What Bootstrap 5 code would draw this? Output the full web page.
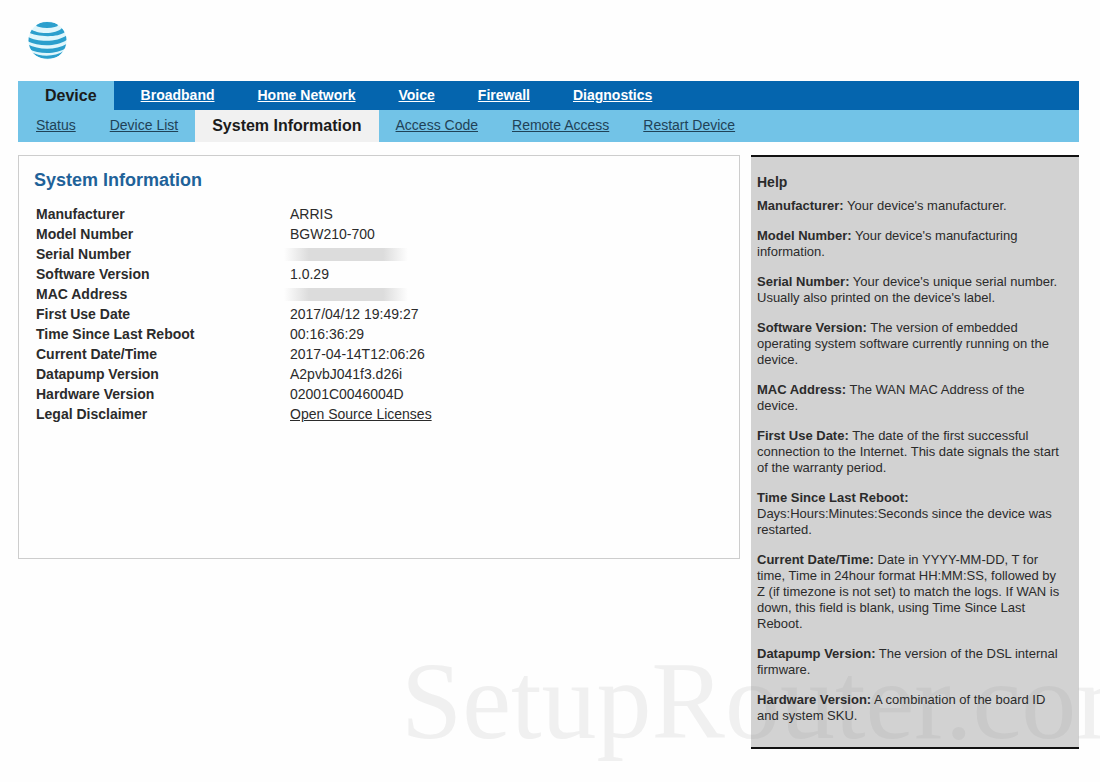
<!DOCTYPE html>
<html lang="en">
<head>
<meta charset="utf-8">
<meta name="viewport" content="width=device-width, initial-scale=1">
<title>System Information</title>
<link href="https://cdn.jsdelivr.net/npm/bootstrap@5.3.0/dist/css/bootstrap.min.css" rel="stylesheet">
<style>
  body { font-family: "Liberation Sans", Arial, sans-serif; font-size: 14px; line-height: 20px; color: #2b2b2b; background: #fefefe; }
  .page { padding: 20px 21px 33px 18px; overflow: hidden; }
  .brand { margin: 0 0 20px 9px; width: 41px; height: 41px; }
  .tabs-main { background: #0565ae; line-height: 29px; }
  .tabs-main .nav-item { margin-left: 43px; }
  .tabs-main .nav-item:nth-child(2) { margin-left: 27px; }
  .tabs-main a { color: #fff; font-weight: 700; }
  .tabs-main .current { margin-left: 0; padding: 0 17px 0 27px; background: #72c3e7; }
  .tabs-sub { background: #72c3e7; line-height: 30px; padding-left: 1px; }
  .tabs-sub .nav-item { padding: 0 17px 2px; }
  .tabs-sub a { color: #1f4257; }
  .tabs-sub .current { background: #f1f1f1; line-height: 32px; padding-bottom: 0; }
  .current { color: #1b1b1b; font-size: 16px; font-weight: 700; }
  .content-row { margin-top: 13px; gap: 11px; }
  .panel { border: 1px solid #cdcdcd; min-height: 404px; padding: 14px 15px; }
  .panel h1 { font-size: 18px; line-height: 20px; font-weight: 700; color: #1f6299; margin: 0 0 14px; }
  .info { margin-left: 2px; }
  .info th { width: 254px; padding: 0; }
  .info td { padding: 0; }
  .info a { color: #2b2b2b; }
  .redacted { display: block; width: 124px; height: 13px; margin-left: -6px; background: linear-gradient(90deg, transparent, #dcdcdc 20%, #dcdcdc 80%, transparent); }
  .help { flex: 0 0 328px; background: rgba(132,132,132,.36); border: solid #111; border-width: 2px 0; padding: 17px 14px 23px 6px; line-height: 16px; font-size: 13px; }
  .help h2 { font-size: 14px; line-height: 16px; font-weight: 700; margin: 0 0 8px; }
  .help p { margin: 0 0 14px; }
  .watermark { left: 401px; right: 0; bottom: 20px; z-index: 0; overflow: hidden; white-space: nowrap; font: 110px/122px "Liberation Serif", "Times New Roman", serif; color: #f0f0f0; pointer-events: none; }
</style>
</head>
<body>
<div class="page position-relative min-vh-100">
  <div class="watermark position-absolute" aria-hidden="true">SetupRouter.com</div>
  <header>
    <svg class="brand d-block" viewBox="0 0 41 41" role="img" aria-label="AT&amp;T">
      <defs><clipPath id="globe"><circle cx="20.500" cy="20.500" r="19"/></clipPath></defs>
      <g clip-path="url(#globe)">
        <rect width="41" height="41" fill="#dff6fc"/>
        <ellipse cx="20" cy="5" rx="11" ry="3" fill="#2b9fcd"/>
        <g fill="#2b9fcd">
          <path d="M4 9 C9 14 29 15 35 8 L38 12 C31 18 9 17 1 12Z"/>
          <path d="M0 16 C8 22 30 23 40 15 L41 19 C29 28 10 26 0 21Z"/>
          <path d="M0 24 C10 30 30 31 41 23 L39 28 C29 35 11 34 2 29Z"/>
          <path d="M4 32 C13 37 28 37 37 31 L32 36 C24 40 15 39 9 36Z"/>
        </g>
      </g>
    </svg>
    <nav aria-label="Main">
      <ul class="tabs-main nav">
        <li class="nav-item current" aria-current="page">Device</li>
        <li class="nav-item"><a href="#">Broadband</a></li>
        <li class="nav-item"><a href="#">Home Network</a></li>
        <li class="nav-item"><a href="#">Voice</a></li>
        <li class="nav-item"><a href="#">Firewall</a></li>
        <li class="nav-item"><a href="#">Diagnostics</a></li>
      </ul>
    </nav>
    <nav aria-label="Device">
      <ul class="tabs-sub nav">
        <li class="nav-item"><a href="#">Status</a></li>
        <li class="nav-item"><a href="#">Device List</a></li>
        <li class="nav-item current" aria-current="page">System Information</li>
        <li class="nav-item"><a href="#">Access Code</a></li>
        <li class="nav-item"><a href="#">Remote Access</a></li>
        <li class="nav-item"><a href="#">Restart Device</a></li>
      </ul>
    </nav>
  </header>
  <div class="content-row d-flex align-items-start position-relative z-1">
    <main class="panel flex-fill">
      <h1>System Information</h1>
      <table class="info">
        <tbody>
          <tr><th scope="row">Manufacturer</th><td>ARRIS</td></tr>
          <tr><th scope="row">Model Number</th><td>BGW210-700</td></tr>
          <tr><th scope="row">Serial Number</th><td><span class="redacted"></span></td></tr>
          <tr><th scope="row">Software Version</th><td>1.0.29</td></tr>
          <tr><th scope="row">MAC Address</th><td><span class="redacted"></span></td></tr>
          <tr><th scope="row">First Use Date</th><td>2017/04/12 19:49:27</td></tr>
          <tr><th scope="row">Time Since Last Reboot</th><td>00:16:36:29</td></tr>
          <tr><th scope="row">Current Date/Time</th><td>2017-04-14T12:06:26</td></tr>
          <tr><th scope="row">Datapump Version</th><td>A2pvbJ041f3.d26i</td></tr>
          <tr><th scope="row">Hardware Version</th><td>02001C0046004D</td></tr>
          <tr><th scope="row">Legal Disclaimer</th><td><a href="#">Open Source Licenses</a></td></tr>
        </tbody>
      </table>
    </main>
    <aside class="help">
      <h2>Help</h2>
      <p><strong>Manufacturer:</strong> Your device's manufacturer.</p>
      <p><strong>Model Number:</strong> Your device's manufacturing information.</p>
      <p><strong>Serial Number:</strong> Your device's unique serial number. Usually also printed on the device's label.</p>
      <p><strong>Software Version:</strong> The version of embedded operating system software currently running on the device.</p>
      <p><strong>MAC Address:</strong> The WAN MAC Address of the device.</p>
      <p><strong>First Use Date:</strong> The date of the first successful connection to the Internet. This date signals the start of the warranty period.</p>
      <p><strong>Time Since Last Reboot:</strong> Days:Hours:Minutes:Seconds since the device was restarted.</p>
      <p><strong>Current Date/Time:</strong> Date in YYYY-MM-DD, T for time, Time in 24hour format HH:MM:SS, followed by Z (if timezone is not set) to match the logs. If WAN is down, this field is blank, using Time Since Last Reboot.</p>
      <p><strong>Datapump Version:</strong> The version of the DSL internal firmware.</p>
      <p class="mb-0"><strong>Hardware Version:</strong> A combination of the board ID and system SKU.</p>
    </aside>
  </div>
</div>
<script src="https://cdn.jsdelivr.net/npm/bootstrap@5.3.0/dist/js/bootstrap.bundle.min.js"></script>
</body>
</html>
